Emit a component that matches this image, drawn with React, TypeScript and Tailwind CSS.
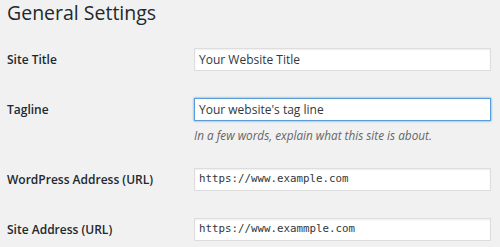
import React from 'react';

// Settings rows for the general settings form
interface SettingRow {
  label: string;
  value: string;
  mono?: boolean;
  focused?: boolean;
  description?: string;
}

const rows: SettingRow[] = [
  { label: 'Site Title', value: 'Your Website Title' },
  {
    label: 'Tagline',
    value: "Your website's tag line",
    focused: true,
    description: 'In a few words, explain what this site is about.',
  },
  { label: 'WordPress Address (URL)', value: 'https://www.example.com', mono: true },
  { label: 'Site Address (URL)', value: 'https://www.exammple.com', mono: true },
];

const Field: React.FC<{ row: SettingRow }> = ({ row }) => {
  const border = row.focused
    ? 'border-[#5b9dd9] shadow-[0_0_2px_rgba(30,140,190,0.8)]'
    : 'border-[#dddddd] shadow-[inset_0_1px_2px_rgba(0,0,0,0.07)]';
  const font = row.mono
    ? "font-['DejaVu_Sans_Mono',monospace] text-[10.8px]"
    : 'text-[12px]';

  return (
    <div className={`w-[297px] h-[23px] flex items-center bg-white border px-[4px] text-[#32373c] ${border} ${font}`}>
      {row.value}
    </div>
  );
};

export default function App() {
  return (
    <div className="w-[500px] h-[247px] overflow-hidden bg-[#f1f1f1] font-['Open_Sans',sans-serif] text-[#23282d] px-[7px]">
      <h1 className="text-[19.5px] leading-[26px]">General Settings</h1>

      <div className="mt-[22px] flex flex-col">
        {rows.map((row, i) => (
          <div key={row.label} className={i === 0 ? '' : i === 2 ? 'mt-[23px]' : 'mt-[27px]'}>
            <div className="flex items-center">
              <div className="w-[187px] text-[12px] font-semibold">{row.label}</div>
              <Field row={row} />
            </div>
            {row.description && (
              <p className="ml-[187px] mt-[4px] text-[11.75px] italic text-[#666666] leading-[20px]">
                {row.description}
              </p>
            )}
          </div>
        ))}
      </div>
    </div>
  );
}
